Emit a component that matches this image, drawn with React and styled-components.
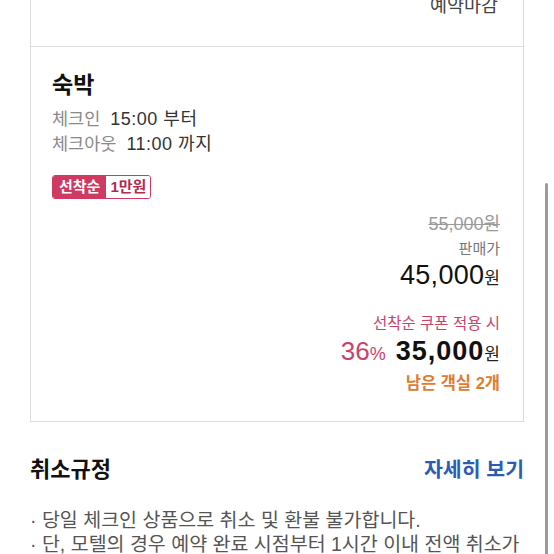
import React from "react";
import styled, { createGlobalStyle } from "styled-components";

const GlobalStyle = createGlobalStyle`
  html, body {
    margin: 0;
    padding: 0;
    background: #ffffff;
  }
  body {
    font-family: "Liberation Sans", "Noto Sans CJK KR", sans-serif;
    color: #222;
    overflow: hidden;
  }
  * { box-sizing: border-box; }
`;

const Page = styled.div`
  width: 554px;
  height: 554px;
  padding: 0 30px;
  overflow: hidden;
  position: relative;
`;

const Cards = styled.div`
  display: flex;
  flex-direction: column;
  margin-top: -30px;
`;

const TopCard = styled.div`
  border: 1px solid #dcdcdc;
  padding: 24px 25px 29px;
  display: flex;
  justify-content: flex-end;
`;

const ClosedText = styled.span`
  font-size: 18.5px;
  line-height: 22px;
  color: #444;
`;

const RoomCard = styled.div`
  border: 1px solid #dcdcdc;
  border-top: none;
  padding: 23px 23px 27px 21px;
  display: flex;
  flex-direction: column;
`;

const RoomTitle = styled.h2`
  margin: 0;
  font-size: 23px;
  line-height: 30px;
  font-weight: 700;
  color: #111;
`;

const TimeList = styled.div`
  margin-top: 7px;
  display: flex;
  flex-direction: column;
`;

const TimeRow = styled.div`
  display: flex;
  align-items: baseline;
  gap: 10px;
  line-height: 25px;
`;

const TimeLabel = styled.span`
  font-size: 17.5px;
  color: #8a8a8a;
`;

const TimeValue = styled.span`
  font-size: 18px;
  letter-spacing: 0.5px;
  color: #333;
`;

const CouponBadge = styled.div`
  margin-top: 18px;
  align-self: flex-start;
  display: inline-flex;
  height: 24px;
  border: 1px solid #cf3a62;
  border-radius: 3px;
  overflow: hidden;
  font-size: 15px;
  font-weight: 700;
  line-height: 22px;
`;

const BadgeTag = styled.span`
  background: #cf3a62;
  color: #fff;
  padding: 0 6px;
`;

const BadgeAmount = styled.span`
  background: #fff;
  color: #b32a50;
  padding: 0 4px;
`;

const PriceBlock = styled.div`
  margin-top: 14px;
  display: flex;
  flex-direction: column;
  align-items: flex-end;
`;

const OriginalPrice = styled.span`
  font-size: 18px;
  line-height: 22px;
  color: #9a9a9a;
  text-decoration: line-through;
`;

const PriceLabel = styled.span`
  margin-top: 4px;
  font-size: 15px;
  line-height: 20px;
  color: #777;
`;

const PriceLine = styled.div`
  display: flex;
  align-items: baseline;
  margin-top: ${(p) => p.$gap || 0}px;
  line-height: ${(p) => p.$lh || 30}px;
`;

const Amount = styled.span`
  font-size: 27px;
  font-weight: ${(p) => (p.$bold ? 700 : 400)};
  letter-spacing: ${(p) => (p.$bold ? "1px" : "0.3px")};
  color: #111;
`;

const Won = styled.span`
  font-size: 17px;
  color: #222;
`;

const CouponLabel = styled.span`
  margin-top: 20px;
  font-size: 15.5px;
  line-height: 20px;
  color: #c8436c;
`;

const Discount = styled.span`
  font-size: 26px;
  color: #c8436c;
  margin-right: 10px;
`;

const Percent = styled.span`
  font-size: 18px;
`;

const RoomsLeft = styled.span`
  margin-top: 2px;
  font-size: 16.5px;
  line-height: 22px;
  font-weight: 700;
  color: #e07b2f;
`;

const Section = styled.section`
  margin-top: 34px;
`;

const SectionHead = styled.div`
  display: flex;
  justify-content: space-between;
  align-items: center;
`;

const SectionTitle = styled.h3`
  margin: 0;
  font-size: 22px;
  line-height: 28px;
  font-weight: 700;
  color: #111;
`;

const MoreLink = styled.a`
  font-size: 20.5px;
  line-height: 28px;
  font-weight: 700;
  color: #2d5cb5;
  text-decoration: none;
`;

const PolicyList = styled.ul`
  margin: 24px 0 0;
  padding: 0;
  list-style: none;
  font-size: 19.5px;
  line-height: 24px;
  color: #555;
  word-break: keep-all;
`;

const ScrollThumb = styled.div`
  position: fixed;
  right: 6px;
  top: 183px;
  bottom: -10px;
  width: 3px;
  border-radius: 2px;
  background: #9b9b9b;
`;

export default function App() {
  return (
    <>
      <GlobalStyle />
      <Page>
        <Cards>
          <TopCard>
            <ClosedText>예약마감</ClosedText>
          </TopCard>
          <RoomCard>
            <RoomTitle>숙박</RoomTitle>
            <TimeList>
              <TimeRow>
                <TimeLabel>체크인</TimeLabel>
                <TimeValue>15:00 부터</TimeValue>
              </TimeRow>
              <TimeRow>
                <TimeLabel>체크아웃</TimeLabel>
                <TimeValue>11:00 까지</TimeValue>
              </TimeRow>
            </TimeList>
            <CouponBadge>
              <BadgeTag>선착순</BadgeTag>
              <BadgeAmount>1만원</BadgeAmount>
            </CouponBadge>
            <PriceBlock>
              <OriginalPrice>55,000원</OriginalPrice>
              <PriceLabel>판매가</PriceLabel>
              <PriceLine $gap={1}>
                <Amount>45,000</Amount>
                <Won>원</Won>
              </PriceLine>
              <CouponLabel>선착순 쿠폰 적용 시</CouponLabel>
              <PriceLine $gap={2} $lh={30}>
                <Discount>
                  36<Percent>%</Percent>
                </Discount>
                <Amount $bold>35,000</Amount>
                <Won>원</Won>
              </PriceLine>
              <RoomsLeft>남은 객실 2개</RoomsLeft>
            </PriceBlock>
          </RoomCard>
        </Cards>
        <Section>
          <SectionHead>
            <SectionTitle>취소규정</SectionTitle>
            <MoreLink>자세히 보기</MoreLink>
          </SectionHead>
          <PolicyList>
            <li>· 당일 체크인 상품으로 취소 및 환불 불가합니다.</li>
            <li>· 단, 모텔의 경우 예약 완료 시점부터 1시간 이내 전액 취소가 가능합니다.</li>
          </PolicyList>
        </Section>
        <ScrollThumb />
      </Page>
    </>
  );
}
